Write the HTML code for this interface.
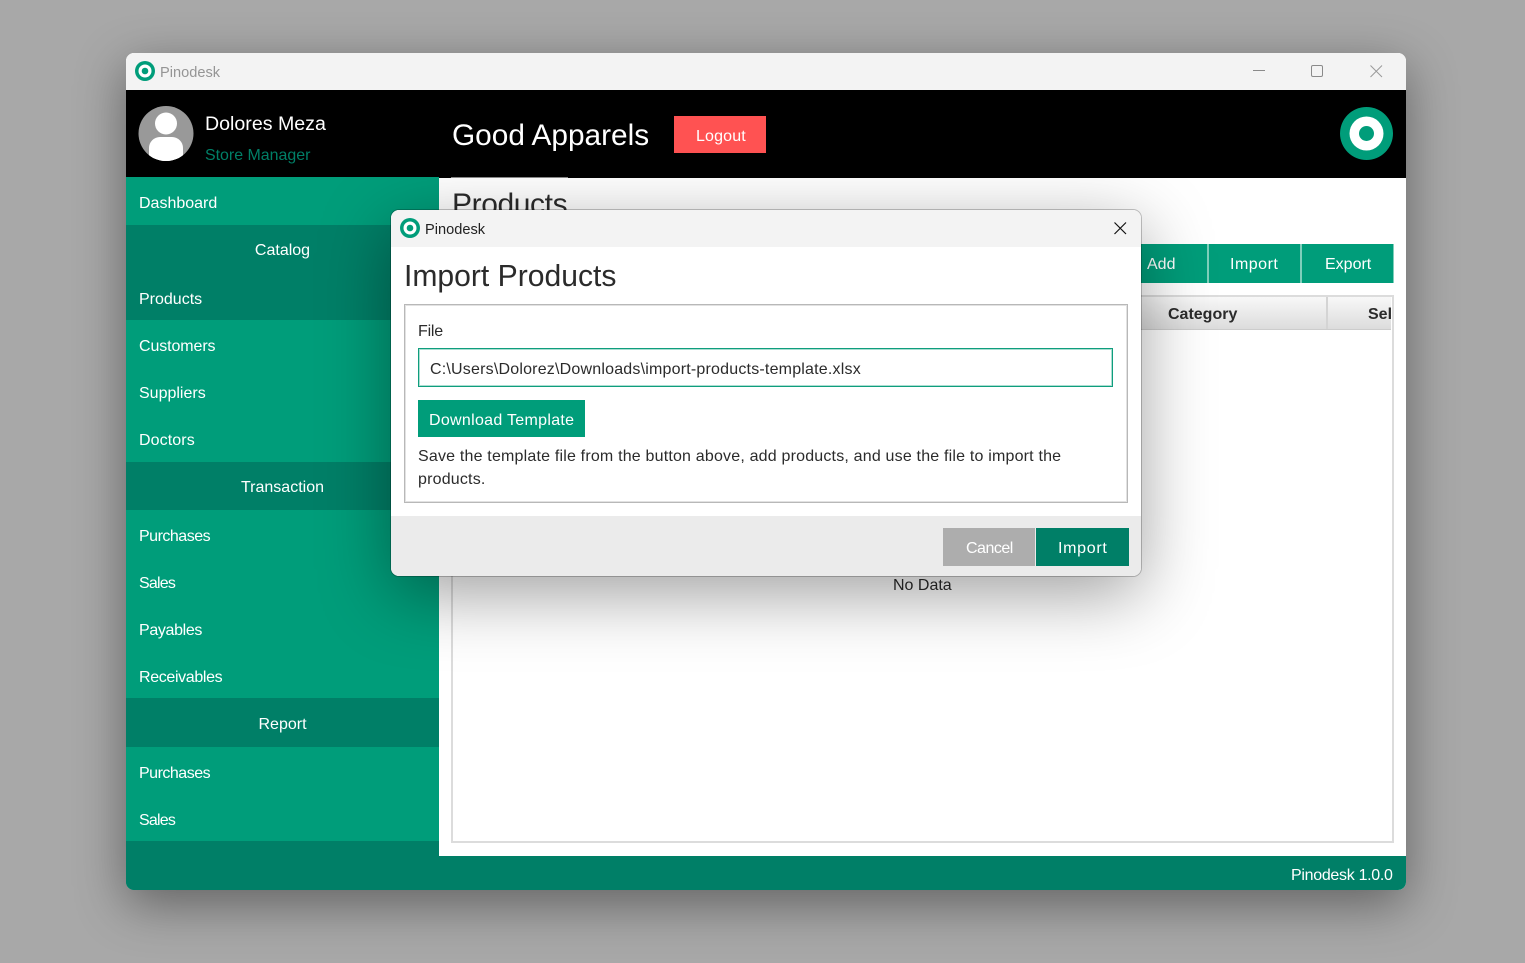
<!DOCTYPE html>
<html><head><meta charset="utf-8"><title>Pinodesk</title>
<style>
*{box-sizing:border-box}
html,body{margin:0;padding:0;width:1525px;height:963px;overflow:hidden;background:#a8a8a8;font-family:"Liberation Sans",sans-serif}
.a{position:absolute}
.t{position:absolute;white-space:nowrap;line-height:20px;height:20px;font-size:16px}
#win{position:absolute;left:126px;top:53px;width:1280px;height:837px;border-radius:8px;background:#fff;box-shadow:0 14px 50px rgba(0,0,0,.42)}
#clip{position:absolute;left:126px;top:53px;width:1280px;height:837px;border-radius:8px;overflow:hidden;background:#fff}
.dark{background:#007f67}
.w{color:#fff}
.d{color:#2b2b2b}
</style></head><body>
<div id="win"></div>
<div id="clip">
  <div class="a" style="left:0;top:0;width:1280px;height:37px;background:#f3f3f3"></div>
  <div class="a" style="left:0;top:37px;width:1280px;height:88px;background:#000"></div>
  <div class="a" style="left:325px;top:124px;width:117px;height:1px;background:#8a8a8a"></div>
  <div class="a" style="left:0;top:124px;width:313px;height:679px;background:#009d7a"></div>
  <div class="a dark" style="left:0;top:172px;width:313px;height:49px"></div>
  <div class="a dark" style="left:0;top:221px;width:313px;height:46px"></div>
  <div class="a dark" style="left:0;top:409px;width:313px;height:48px"></div>
  <div class="a dark" style="left:0;top:645px;width:313px;height:49px"></div>
  <div class="a dark" style="left:0;top:788px;width:313px;height:49px"></div>
  <div class="a dark" style="left:0;top:803px;width:1280px;height:34px"></div>
</div>
<svg class="a" style="left:0;top:0" width="1525" height="963">
  <circle cx="145" cy="71" r="10" fill="#009d7a"/><circle cx="145" cy="71" r="6.5" fill="#fff"/><circle cx="145" cy="71" r="3.3" fill="#009d7a"/>
  <path d="M1253 70.5H1265" stroke="#8a8a8a" stroke-width="1"/>
  <rect x="1311.5" y="65.5" width="11" height="11" rx="1.5" fill="none" stroke="#8a8a8a" stroke-width="1"/>
  <path d="M1370.5 65.5L1382 77M1382 65.5L1370.5 77" stroke="#999" stroke-width="1"/>
  <circle cx="166" cy="133.5" r="27.5" fill="#999"/>
  <circle cx="166" cy="123.5" r="11" fill="#fff"/>
  <clipPath id="av"><circle cx="166" cy="133.5" r="27.5"/></clipPath>
  <rect x="149" y="137" width="34" height="24" rx="11" fill="#fff" clip-path="url(#av)"/>
  <rect x="149" y="148" width="34" height="13" fill="#fff" clip-path="url(#av)"/>
  <circle cx="1366.5" cy="133.5" r="26.5" fill="#009d7a"/><circle cx="1366.5" cy="133.5" r="17" fill="#fff"/><circle cx="1366.5" cy="133.5" r="7.5" fill="#009d7a"/>
</svg>
<div class="t" style="left:160px;top:63px;color:#959595;font-size:14.6px">Pinodesk</div>
<div class="t w" style="left:205px;top:114px;font-size:19.6px">Dolores Meza</div>
<div class="t" style="left:205px;top:146px;color:#007f67;font-size:15.95px">Store Manager</div>
<div class="t w" style="left:452px;top:126px;font-size:29.8px;line-height:20px">Good Apparels</div>
<div class="a" style="left:674px;top:116px;width:92px;height:37px;background:#ff5252"></div>
<div class="t w" style="left:696px;top:127px;font-size:16px;letter-spacing:.15px">Logout</div>

<div class="t w" style="left:139px;top:193.5px">Dashboard</div>
<div class="t w" style="left:126px;width:313px;text-align:center;top:240.5px">Catalog</div>
<div class="t w" style="left:139px;top:289.5px">Products</div>
<div class="t w" style="left:139px;top:336.5px;letter-spacing:-.1px">Customers</div>
<div class="t w" style="left:139px;top:383.5px">Suppliers</div>
<div class="t w" style="left:139px;top:430.5px;letter-spacing:.1px">Doctors</div>
<div class="t w" style="left:126px;width:313px;text-align:center;top:477.5px">Transaction</div>
<div class="t w" style="left:139px;top:526.5px;letter-spacing:-.5px">Purchases</div>
<div class="t w" style="left:139px;top:573.5px;letter-spacing:-.8px">Sales</div>
<div class="t w" style="left:139px;top:620.5px;letter-spacing:-.35px">Payables</div>
<div class="t w" style="left:139px;top:667.5px;letter-spacing:-.35px">Receivables</div>
<div class="t w" style="left:126px;width:313px;text-align:center;top:714.5px">Report</div>
<div class="t w" style="left:139px;top:763.5px;letter-spacing:-.5px">Purchases</div>
<div class="t w" style="left:139px;top:810.5px;letter-spacing:-.8px">Sales</div>
<div class="t w" style="left:1291px;top:865.5px;letter-spacing:-.3px">Pinodesk 1.0.0</div>

<div class="t d" style="left:452px;top:190px;font-size:30px;height:30px;line-height:30px;letter-spacing:-.4px">Products</div>
<div class="a" style="left:1100px;top:244px;width:293px;height:39px;background:#009d7a"></div>
<div class="a" style="left:1207px;top:244px;width:2px;height:39px;background:#7fcfbb"></div>
<div class="a" style="left:1300px;top:244px;width:2px;height:39px;background:#7fcfbb"></div>
<div class="a" style="left:1393px;top:244px;width:1px;height:39px;background:#7fcfbb"></div>
<div class="t w" style="left:1147px;top:254.5px">Add</div>
<div class="t w" style="left:1230px;top:254.5px;letter-spacing:.5px">Import</div>
<div class="t w" style="left:1325px;top:254.5px">Export</div>
<div class="a" style="left:451px;top:295px;width:943px;height:548px;border:2px solid #dcdcdc;background:#fff"></div>
<div class="a" style="left:453px;top:297px;width:938px;height:33px;background:linear-gradient(#f8f8f8,#dcdcdc);border-bottom:1px solid #ccc"></div>
<div class="a" style="left:1326px;top:297px;width:2px;height:32px;background:#d4d4d4"></div>
<div class="t d" style="left:1168px;top:304.5px;font-weight:bold">Category</div>
<div class="a" style="left:1300px;top:304.5px;width:90.5px;height:20px;overflow:hidden"><div class="t d" style="left:68px;top:0;font-weight:bold">Select</div></div>
<div class="t d" style="left:893px;top:575.5px">No Data</div>

<div class="a" style="left:391px;top:210px;width:750px;height:366px;border-radius:8px;overflow:hidden;background:#fff;box-shadow:0 18px 70px rgba(0,0,0,.38),0 0 0 1px rgba(0,0,0,.22)">
  <div class="a" style="left:0;top:0;width:750px;height:37px;background:#f3f3f3"></div>
  <div class="a" style="left:0;top:306px;width:750px;height:60px;background:#ebebeb"></div>
  <div class="a" style="left:13px;top:94px;width:724px;height:199px;border:1px solid #b8b8b8;box-shadow:inset 0 0 0 1px #e2e2e2"></div>
  <div class="a" style="left:27px;top:138px;width:695px;height:39px;border:1px solid #0f9e7d;box-shadow:inset 0 0 0 1px rgba(15,158,125,.35);background:#fff"></div>
  <div class="a" style="left:27px;top:190px;width:167px;height:37px;background:#009d7a"></div>
  <div class="a" style="left:552px;top:318px;width:92px;height:38px;background:#adadad"></div>
  <div class="a" style="left:645px;top:318px;width:93px;height:38px;background:#007f67"></div>
</div>
<svg class="a" style="left:0;top:0" width="1525" height="963">
  <circle cx="410" cy="228" r="10" fill="#009d7a"/><circle cx="410" cy="228" r="6.5" fill="#fff"/><circle cx="410" cy="228" r="3.3" fill="#009d7a"/>
  <path d="M1114.5 222.5L1126 234M1126 222.5L1114.5 234" stroke="#111" stroke-width="1.2"/>
</svg>
<div class="t" style="left:425px;top:220px;color:#222;font-size:14.6px">Pinodesk</div>
<div class="t d" style="left:404px;top:262px;font-size:30.1px;height:30px;line-height:30px">Import Products</div>
<div class="t d" style="left:418px;top:321.5px;letter-spacing:-.2px">File</div>
<div class="t d" style="left:430px;top:359.5px;letter-spacing:.2px">C:\Users\Dolorez\Downloads\import-products-template.xlsx</div>
<div class="t w" style="left:429px;top:410.5px;letter-spacing:.3px">Download Template</div>
<div class="t d" style="left:418px;top:446.5px;letter-spacing:.19px">Save the template file from the button above, add products, and use the file to import the</div>
<div class="t d" style="left:418px;top:469.5px;letter-spacing:.19px">products.</div>
<div class="t w" style="left:966px;top:538.5px;letter-spacing:-.5px">Cancel</div>
<div class="t w" style="left:1058px;top:538.5px;letter-spacing:.7px">Import</div>
</body></html>
